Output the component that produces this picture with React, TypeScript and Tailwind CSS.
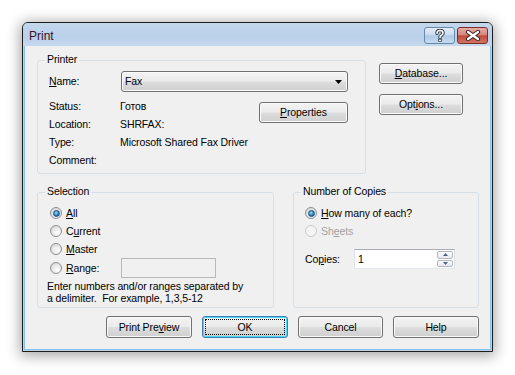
import React from 'react';

function Btn({ children, def = false, className = '' }: { children: React.ReactNode; def?: boolean; className?: string }) {
  return (
    <button
      className={`flex items-center justify-center rounded-[3px] border text-[10.5px] leading-[13px] tracking-[-0.1px] text-black ${
        def
          ? 'border-[#3c7fb1] shadow-[inset_0_0_0_1px_#48d8fb] outline-1 outline-dotted outline-black outline-offset-[-4px]'
          : 'border-[#707070] shadow-[inset_0_0_0_1px_#fbfbfb]'
      } bg-[linear-gradient(#f3f3f3,#ebebeb_48%,#dddddd_52%,#cfcfcf)] ${className}`}
    >
      {children}
    </button>
  );
}

function Radio({ checked = false, disabled = false }: { checked?: boolean; disabled?: boolean }) {
  return (
    <span
      className={`flex h-[12px] w-[12px] shrink-0 items-center justify-center rounded-full border ${
        disabled
          ? 'border-[#cacaca] bg-[#f4f4f4]'
          : 'border-[#8e8f8f] bg-[radial-gradient(circle_at_65%_70%,#ffffff,#e6e6e6_55%,#cbcbcb)]'
      }`}
    >
      {checked && (
        <span className="h-[7px] w-[7px] rounded-full border border-[#1b4a72] bg-[radial-gradient(circle_at_40%_35%,#9ddcff,#2a86c8_55%,#0e4a80)]" />
      )}
    </span>
  );
}

function Group({ title, className = '', children }: { title: string; className?: string; children?: React.ReactNode }) {
  return (
    <div className={`relative rounded-[3px] border border-[#d5dfe5] ${className}`}>
      <span className="absolute -top-[8px] left-[7px] bg-[#f0f0f0] px-[2px] leading-[13px]">{title}</span>
      {children}
    </div>
  );
}

function Row({ children }: { children: React.ReactNode }) {
  return <div className="flex h-[18px] items-center gap-[4px]">{children}</div>;
}

export default function App() {
  return (
    <div className="h-[375px] w-[515px] bg-white pl-[22px] pt-[22px] font-['Liberation_Sans',Arial,sans-serif] text-[10.5px] leading-[13px] tracking-[-0.1px] text-black">
      <div className="flex h-[330px] w-[471px] flex-col overflow-hidden rounded-t-[6px] border border-[#1e1e1e] bg-[#bcd3ea] shadow-[0_2px_14px_2px_rgba(0,0,0,0.35)]">
        {/* title bar */}
        <div className="flex h-[23px] shrink-0 items-start bg-[linear-gradient(#c3d7ed,#bad1ea_60%,#c6d9ee)] pl-[6px] pr-[4px]">
          <span className="mt-[6px] text-[12px] leading-[14px] tracking-normal text-[#3e1024]">Print</span>
          <div className="ml-auto mt-[4px] flex gap-[2px]">
            <div className="flex h-[17px] w-[31px] items-center justify-center rounded-[3px] border border-[#6b88a8] bg-[linear-gradient(#e4edf8,#cbdcef_45%,#afc8e3_52%,#c6dcf1)]">
              <svg width="12" height="13" viewBox="0 0 12 13">
                <path d="M3 4.2 Q3 1.5 6 1.5 Q9 1.5 9 4 Q9 5.6 7 6.5 Q6 7 6 8.6" fill="none" stroke="#2f3d4c" strokeWidth="3.6" strokeLinecap="round" />
                <rect x="4.2" y="9.8" width="3.6" height="3" fill="#2f3d4c" />
                <path d="M3 4.2 Q3 1.5 6 1.5 Q9 1.5 9 4 Q9 5.6 7 6.5 Q6 7 6 8.6" fill="none" stroke="#fff" strokeWidth="1.6" strokeLinecap="round" />
                <rect x="5.1" y="10.6" width="1.8" height="1.6" fill="#fff" />
              </svg>
            </div>
            <div className="flex h-[17px] w-[31px] items-center justify-center rounded-[3px] border border-[#7a2e26] bg-[linear-gradient(#e6aca4,#d6887c_45%,#c2493c_52%,#d27462)]">
              <svg width="16" height="11" viewBox="0 0 16 11">
                <path d="M3 2 L13 9 M13 2 L3 9" stroke="#3a2a2a" strokeWidth="4.2" strokeLinecap="round" />
                <path d="M3 2 L13 9 M13 2 L3 9" stroke="#fff" strokeWidth="2.2" strokeLinecap="round" />
              </svg>
            </div>
          </div>
        </div>

        {/* client area */}
        <div className="flex flex-1 px-[1px] pb-[1px]">
          <div className="flex flex-1 flex-col border border-t-0 border-[#82c3ee] bg-[#f0f0f0] pl-[12px] pr-[10px] pt-[14px]">
            {/* printer row */}
            <div className="flex gap-[13px]">
              <Group title="Printer" className="h-[114px] w-[329px] pl-[11px] pt-[10px]">
                <div className="flex items-center">
                  <span className="w-[72px]">
                    <u>N</u>ame:
                  </span>
                  <div className="flex h-[21px] w-[227px] items-center rounded-[3px] border border-[#707070] bg-[linear-gradient(#f3f3f3,#ebebeb_48%,#dddddd_52%,#cfcfcf)] pl-[3px] pr-[5px] shadow-[inset_0_0_0_1px_#fbfbfb]">
                    <span>Fax</span>
                    <svg className="ml-auto" width="7" height="4" viewBox="0 0 7 4">
                      <path d="M0 0 H7 L3.5 4 Z" fill="#000" />
                    </svg>
                  </div>
                </div>
                <div className="mt-[5px] flex w-[299px] justify-between">
                  <div className="grid grid-cols-[71px_auto] auto-rows-[18px] items-center leading-[18px]">
                    <span>Status:</span>
                    <span>Готов</span>
                    <span>Location:</span>
                    <span>SHRFAX:</span>
                    <span>Type:</span>
                    <span>Microsoft Shared Fax Driver</span>
                    <span>Comment:</span>
                    <span></span>
                  </div>
                  <Btn className="mt-[5px] h-[21px] w-[89px]">
                    <span>
                      <u>P</u>roperties
                    </span>
                  </Btn>
                </div>
              </Group>
              <div className="flex flex-col gap-[10px] pt-[3px]">
                <Btn className="h-[21px] w-[84px]">
                  <span>
                    <u>D</u>atabase...
                  </span>
                </Btn>
                <Btn className="h-[21px] w-[84px]">
                  <span>
                    Opt<u>i</u>ons...
                  </span>
                </Btn>
              </div>
            </div>

            {/* selection + copies */}
            <div className="mt-[18px] flex gap-[19px]">
              <Group title="Selection" className="h-[116px] w-[237px] pl-[12px] pt-[11px]">
                <Row>
                  <Radio checked />
                  <span>
                    <u>A</u>ll
                  </span>
                </Row>
                <Row>
                  <Radio />
                  <span>
                    C<u>u</u>rrent
                  </span>
                </Row>
                <Row>
                  <Radio />
                  <span>
                    <u>M</u>aster
                  </span>
                </Row>
                <div className="flex h-[20px] items-center gap-[4px]">
                  <Radio />
                  <span className="w-[51px]">
                    <u>R</u>ange:
                  </span>
                  <div className="h-[20px] w-[95px] border border-[#b8b8b8] bg-[#f0f0f0]" />
                </div>
                <p className="-ml-[3px] mt-[2px] whitespace-nowrap leading-[12px]">
                  Enter numbers and/or ranges separated by
                  <br />
                  a delimiter.&nbsp; For example, 1,3,5-12
                </p>
              </Group>
              <Group title="Number of Copies" className="h-[116px] w-[186px] pl-[11px] pt-[11px]">
                <Row>
                  <Radio checked />
                  <span>
                    <u>H</u>ow many of each?
                  </span>
                </Row>
                <Row>
                  <Radio disabled />
                  <span className="text-[#a0a0a0]">
                    Sh<u>e</u>ets
                  </span>
                </Row>
                <div className="mt-[9px] flex h-[20px] items-center">
                  <span className="w-[49px]">
                    Co<u>p</u>ies:
                  </span>
                  <div className="flex h-[20px] w-[101px] items-center border border-[#abadb3] border-l-[#e2e3ea] border-r-[#dbdfe6] border-b-[#e3e9ef] bg-white pl-[3px]">
                    <span>1</span>
                    <div className="ml-auto mr-[1px] flex h-[16px] w-[16px] flex-col gap-[1px]">
                      <div className="flex flex-1 items-center justify-center rounded-[2px] border border-[#b3b9c2] bg-[linear-gradient(#fafafa,#e6e9ee)]">
                        <svg width="5" height="3" viewBox="0 0 5 3">
                          <path d="M0 3 L2.5 0 L5 3 Z" fill="#4d6185" />
                        </svg>
                      </div>
                      <div className="flex flex-1 items-center justify-center rounded-[2px] border border-[#b3b9c2] bg-[linear-gradient(#fafafa,#e6e9ee)]">
                        <svg width="5" height="3" viewBox="0 0 5 3">
                          <path d="M0 0 H5 L2.5 3 Z" fill="#4d6185" />
                        </svg>
                      </div>
                    </div>
                  </div>
                </div>
              </Group>
            </div>

            {/* buttons */}
            <div className="mr-[1px] mt-[8px] flex justify-end gap-[10px]">
              <Btn className="h-[22px] w-[86px]">
                <span>
                  Print Pre<u>v</u>iew
                </span>
              </Btn>
              <Btn def className="h-[22px] w-[86px]">
                OK
              </Btn>
              <Btn className="h-[22px] w-[85px]">Cancel</Btn>
              <Btn className="h-[22px] w-[86px]">Help</Btn>
            </div>
          </div>
        </div>
      </div>
    </div>
  );
}
